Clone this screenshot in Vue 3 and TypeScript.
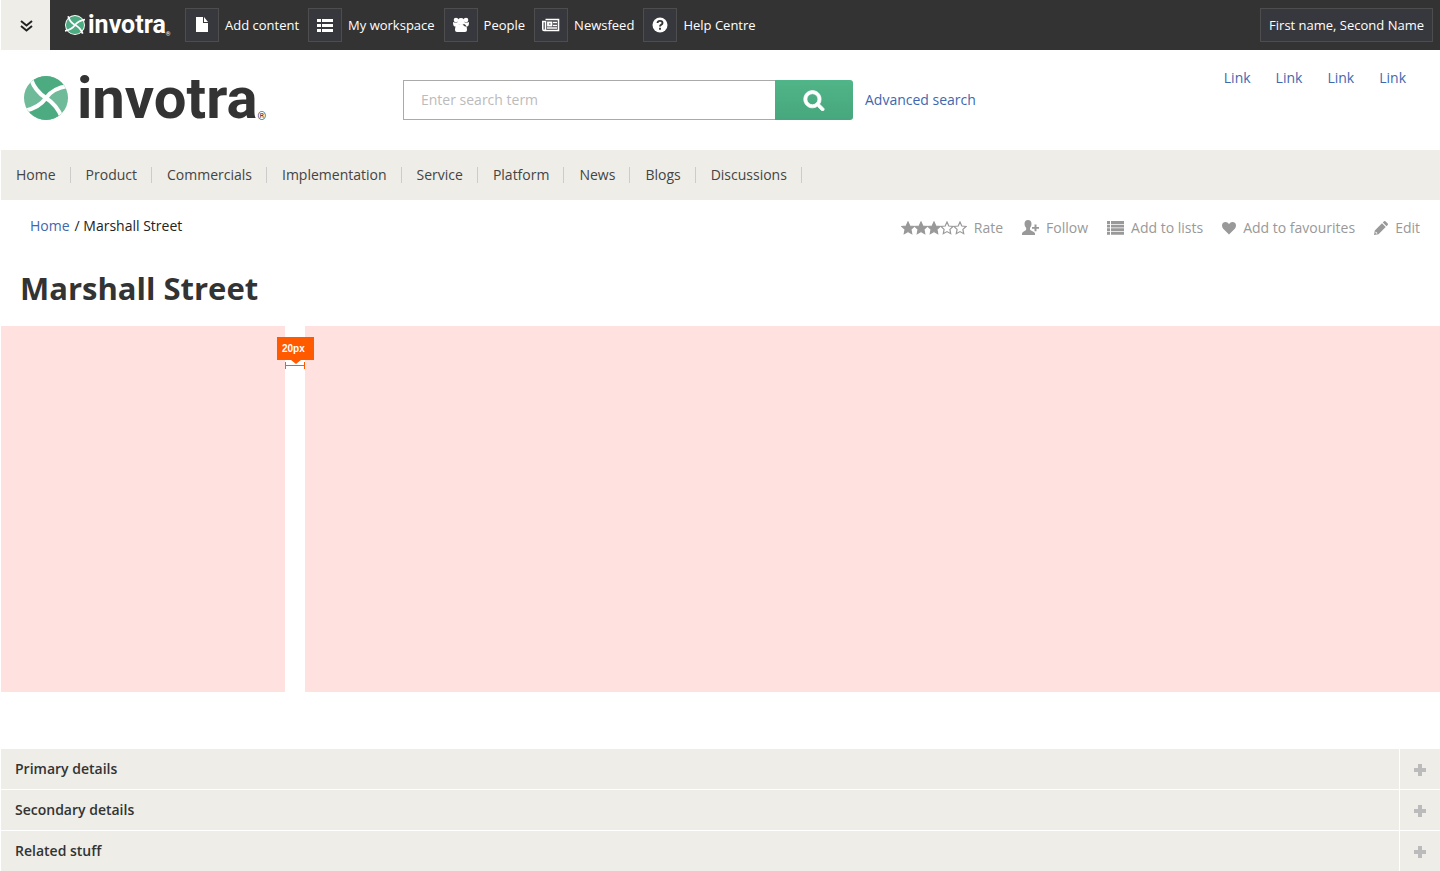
<script setup lang="ts">
import { ref } from 'vue'

interface Shortcut { label: string; icon: string }

const shortcuts: Shortcut[] = [
  { label: 'Add content', icon: 'file' },
  { label: 'My workspace', icon: 'list' },
  { label: 'People', icon: 'people' },
  { label: 'Newsfeed', icon: 'news' },
  { label: 'Help Centre', icon: 'help' },
]
const links: string[] = ['Link', 'Link', 'Link', 'Link']
const menu: string[] = ['Home', 'Product', 'Commercials', 'Implementation', 'Service', 'Platform', 'News', 'Blogs', 'Discussions']
const sections: string[] = ['Primary details', 'Secondary details', 'Related stuff']
const stars: boolean[] = [true, true, true, false, false]
const term = ref('')
const open = ref<number | null>(null)

function toggle(index: number): void {
  open.value = open.value === index ? null : index
}
</script>

<template>
  <div class="page">
    <header class="topbar">
      <button class="expand" type="button" aria-label="Expand toolbar">
        <svg width="13" height="12" viewBox="0 0 13 12" fill="none" stroke="#222" stroke-width="2"><path d="M1 1l5.500 4.500L12 1M1 6l5.500 4.500L12 6" /></svg>
      </button>
      <a class="brand small" href="#" aria-label="invotra home">
        <svg class="mark" viewBox="0 0 44 44">
          <circle cx="22" cy="22" r="22" fill="#fff" />
          <circle cx="22" cy="22" r="20" fill="#4dab82" />
          <path d="M7 3Q11 17 22 22T39 41M44 10Q29 12 22 22T0 35" fill="none" stroke="#fff" stroke-width="4" />
        </svg>
        <span class="word">invotra</span><span class="reg">®</span>
      </a>
      <nav class="shortcuts" aria-label="Shortcuts">
        <a v-for="s in shortcuts" :key="s.label" href="#" class="shortcut">
          <span class="tile">
            <svg v-if="s.icon === 'file'" width="14" height="16" viewBox="0 0 14 16" fill="#fff"><path d="M1 0h7v6h5v9H1zM9 0l4 5H9z" /></svg>
            <svg v-else-if="s.icon === 'list'" width="16" height="16" viewBox="0 0 16 16" fill="#fff"><path d="M0 2h4v3H0zM5 2h11v3H5zM0 7h4v3H0zM5 7h11v3H5zM0 12h4v3H0zM5 12h11v3H5z" /></svg>
            <svg v-else-if="s.icon === 'people'" width="16" height="16" viewBox="0 0 16 16" fill="#fff"><circle cx="3" cy="3" r="2.300" /><circle cx="13" cy="3" r="2.300" /><circle cx="8" cy="4.500" r="3.500" /><path d="M0 5q3 1 5 0l1 3-2 1.500H2Q0 9.500 0 5zM16 5q-3 1-5 0l-1 3 2 1.500h2q2 0 2-4.500zM5 7q3 1 6 0 3 1 3 6 0 2-2 2H4q-2 0-2-2 0-5 3-6z" /></svg>
            <svg v-else-if="s.icon === 'news'" width="18" height="14" viewBox="0 0 18 14" fill="none" stroke="#fff"><path d="M3.500 1.500h13v11H2q-1.200 0-1.200-1.500V3.500h2.700M3.500 3v8q0 1.500-1.500 1.500" stroke-width="1.600" /><path d="M6 4.500h3.500v3H6z" stroke-width="1.800" /><path d="M11 4.500h4M11 7.500h4M5 10h10" stroke-width="1.500" /></svg>
            <svg v-else width="16" height="16" viewBox="0 0 16 16"><circle cx="8" cy="8" r="7.500" fill="#fff" /><path d="M5.500 6Q5.700 3.900 8 3.900q2.500 0 2.500 2 0 1.200-1.200 1.800Q8 8.400 8 9.500M8 10.800v2" fill="none" stroke="#333" stroke-width="1.900" /></svg>
          </span>
          <span>{{ s.label }}</span>
        </a>
      </nav>
      <button class="user" type="button">First name, Second Name</button>
    </header>

    <div class="masthead">
      <a class="brand large" href="#" aria-label="invotra">
        <svg class="mark" viewBox="0 0 44 44">
          <defs><clipPath id="disc"><circle cx="22" cy="22" r="22" /></clipPath></defs>
          <g clip-path="url(#disc)">
            <path d="M0 0h44v44H0z" fill="#6fba98" />
            <path d="M7 3Q11 15 22 22Q29 12 44 10V0H7zM0 35Q15 32 22 22Q34 29 38 42V44H0z" fill="#4dab82" />
            <path d="M7 3Q11 15 22 22T38 42M44 10Q29 12 22 22T0 35" fill="none" stroke="#fff" stroke-width="4" />
          </g>
        </svg>
        <span class="word">invotra</span><span class="reg">®</span>
      </a>
      <form class="search" role="search" @submit.prevent>
        <input v-model="term" type="text" placeholder="Enter search term" aria-label="Search term" />
        <button type="submit" aria-label="Search">
          <svg width="22" height="22" viewBox="0 0 1664 1792" fill="#fff" stroke="#fff" stroke-width="60"><path d="M1152 832q0-185-131.500-316.500t-316.500-131.500-316.500 131.500-131.500 316.500 131.500 316.500 316.500 131.500 316.500-131.500 131.500-316.500zm512 832q0 52-38 90t-90 38q-54 0-90-38l-343-342q-179 124-399 124-143 0-273.500-55.500t-225-150-150-225-55.500-273.500 55.500-273.500 150-225 225-150 273.500-55.500 273.500 55.500 225 150 150 225 55.500 273.500q0 220-124 399l343 343q37 37 37 90z" /></svg>
        </button>
        <a href="#">Advanced search</a>
      </form>
      <nav class="quick" aria-label="Quick links">
        <a v-for="(l, i) in links" :key="i" href="#">{{ l }}</a>
      </nav>
    </div>

    <nav class="menu" aria-label="Main">
      <a v-for="m in menu" :key="m" href="#">{{ m }}</a>
    </nav>

    <div class="context">
      <nav class="crumbs" aria-label="Breadcrumb"><a href="#">Home</a><span>/ Marshall Street</span></nav>
      <div class="actions">
        <button type="button">
          <svg width="66" height="14" viewBox="0 0 66 14" stroke="#999" stroke-width="1.200">
            <path v-for="(full, i) in stars" :key="i" :transform="`translate(${i * 13} 0)`" :fill="full ? '#999' : 'none'" d="M7 1l1.800 4 4.200.5-3.100 2.900.8 4.300L7 10.600l-3.700 2.100.8-4.300L1 5.500 5.200 5z" />
          </svg>Rate
        </button>
        <button type="button">
          <svg width="17" height="16" viewBox="0 0 17 16" fill="#999"><path d="M6 0q3.500 0 3.500 4 0 2.500-1.500 4v1.500q0 .8 2 1.500 3 1 3 2.500V15H0v-1.500Q0 12 2.500 11q1.700-.7 1.700-1.500V8Q2.500 6.500 2.500 4 2.500 0 6 0zM12.500 4.500h2V7H17v1.800h-2.500v2.500h-2V8.800H10V7h2.500z" /></svg>Follow
        </button>
        <button type="button">
          <svg width="17" height="14" viewBox="0 0 17 14" fill="#999"><path d="M0 0h3v3H0zM4 0h13v3H4zM0 3.700h3v2.800H0zM4 3.700h13v2.800H4zM0 7.200h3V10H0zM4 7.200h13V10H4zM0 10.700h3v3H0zM4 10.700h13v3H4z" /></svg>Add to lists
        </button>
        <button type="button">
          <svg width="14" height="14" viewBox="0 0 14 14" fill="#999"><path d="M7 13.500L1.200 7.800Q0 6.400 0 4.500 0 1 3.700 1 5.500 1 7 3q1.500-2 3.300-2Q14 1 14 4.500q0 1.900-1.200 3.300z" /></svg>Add to favourites
        </button>
        <button type="button">
          <svg width="14" height="14" viewBox="0 0 14 14" fill="#999"><path fill-rule="evenodd" d="M0 14l.8-4.500L8 2.300 11.700 6l-7.200 7.200zM1.800 10.600l1.700 1.700-1.200.4-.9-.9zM8.800 1.500L10 .3q.7-.6 1.400 0l2.300 2.300q.6.700 0 1.400l-1.200 1.200z" /></svg>Edit
        </button>
      </div>
    </div>

    <main>
      <h1>Marshall Street</h1>
      <div class="columns">
        <div class="panel"></div>
        <div class="gutter">
          <div class="measure">
            <span class="tag">20px</span>
            <svg width="20" height="7" viewBox="0 0 20 7" fill="none" stroke="#ff5a00"><path d="M.5 0v7M19.500 0v7M0 3.500h20" /></svg>
          </div>
        </div>
        <div class="panel"></div>
      </div>
      <section class="details">
        <h2 v-for="(s, i) in sections" :key="s">
          <button type="button" :aria-expanded="open === i" @click="toggle(i)">
            <span class="title">{{ s }}</span>
            <span class="plus"><svg width="12" height="12" viewBox="0 0 12 12" fill="#bbb"><path d="M4 0h4v4h4v4H8v4H4V8H0V4h4z" /></svg></span>
          </button>
        </h2>
      </section>
    </main>
  </div>
</template>

<style>
body { margin: 0; background: #fff; }
</style>

<style scoped>
.page { padding-left: 1px; font: 14px/20px "Open Sans", "Noto Sans", sans-serif; color: #333; }
.page * { box-sizing: border-box; }
a { color: #3f67ae; text-decoration: none; }
button { font: inherit; color: inherit; border: 0; padding: 0; background: none; cursor: pointer; }
svg { display: block; flex: none; }

.topbar { display: flex; align-items: center; height: 50px; padding-right: 7px; background: #333; font-size: 13px; color: #fff; }
.expand { display: flex; align-items: center; justify-content: center; width: 49px; height: 50px; padding-left: 2px; padding-top: 2px; background: #eeede7; }
.brand { display: flex; align-items: center; font-family: Roboto, sans-serif; font-weight: 700; }
.small { width: 120px; margin-left: 15px; color: #fff; }
.small .mark { width: 20px; height: 20px; margin-right: 3px; }
.small .word { font-size: 25px; line-height: 30px; }
.small .reg { align-self: flex-end; font-size: 6px; line-height: 12px; font-weight: 400; }
.shortcuts { display: flex; gap: 9px; }
.shortcut { display: flex; align-items: center; gap: 6px; color: #fff; }
.tile { display: flex; align-items: center; justify-content: center; width: 34px; height: 34px; border: 1px solid #4d4d4d; background: #37383d; }
.user { height: 34px; margin-left: auto; padding: 0 8px; border: 1px solid #4d4d4d; background: #37383d; }

.masthead { display: flex; align-items: center; height: 100px; padding: 0 34px 0 23px; }
.large { width: 379px; padding-bottom: 4px; color: #333; }
.large .mark { width: 44px; height: 44px; margin-right: 9px; }
.large .word { font-size: 58px; line-height: 60px; }
.large .reg { align-self: flex-end; font-size: 11px; line-height: 22px; font-weight: 400; }
.search { display: flex; align-items: center; }
.search input { width: 372px; height: 40px; padding: 0 17px 2px; border: 1px solid #aaa; border-right: 0; border-radius: 0; outline: 0; font: inherit; color: #333; }
.search input::placeholder { color: #bbb; opacity: 1; }
.search button { display: flex; align-items: center; justify-content: center; width: 78px; height: 40px; margin-right: 12px; border-radius: 0 3px 3px 0; background: linear-gradient(#50b588, #47a67d); }
.quick { display: flex; align-self: flex-start; gap: 25px; margin-left: auto; padding-top: 18px; }

.menu { display: flex; align-items: center; height: 50px; background: #eeede7; }
.menu a { padding: 0 14px 0 15px; border-right: 1px solid #ccc; color: #444; line-height: 16px; }

.context { display: flex; justify-content: space-between; padding: 16px 20px 0 29px; }
.crumbs { display: flex; gap: 5px; color: #222; }
.actions { display: flex; gap: 19px; padding-top: 2px; color: #999; }
.actions button { display: flex; align-items: center; gap: 7px; }

h1 { margin: 0; padding: 30px 20px 18px 19px; font-size: 31px; line-height: 40px; }
.columns { display: grid; grid-template-columns: 284px 20px 1fr; height: 366px; }
.panel { background: #ffe2df; }
.gutter { position: relative; }
.measure { position: absolute; top: 11px; left: -8px; display: flex; flex-direction: column; gap: 2px; }
.measure svg { margin-left: 8px; }
.tag { position: relative; width: 37px; height: 23px; padding-left: 5px; background: #ff5a00; color: #fff; font: 700 10px/23px "Liberation Sans", sans-serif; }
.tag::after { content: ""; position: absolute; top: 23px; left: 14px; border: 5px solid transparent; border-top: 4px solid #ff5a00; border-bottom: 0; }
.details { display: grid; gap: 1px; margin-top: 57px; }
h2 { margin: 0; font-size: 14px; line-height: 20px; font-weight: 600; }
h2 button { display: flex; gap: 1px; width: 100%; height: 40px; text-align: left; }
.title { flex: 1; padding: 10px 14px; background: #eeede7; }
.plus { display: flex; align-items: center; justify-content: center; width: 40px; height: 40px; padding-top: 2px; background: #eeede7; }
</style>
